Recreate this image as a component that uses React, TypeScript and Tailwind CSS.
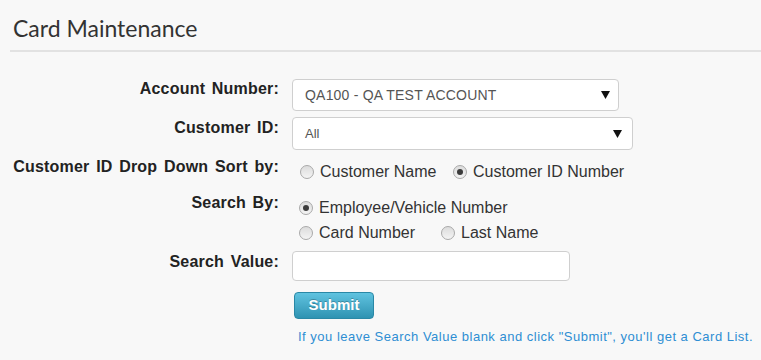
import React from 'react';

const labelCls =
  "w-[279px] shrink-0 text-right font-bold text-[16px] leading-[18px] text-[#222] [word-spacing:2px] tracking-[0.2px]";

const Radio = ({ checked }: { checked?: boolean }) => (
  <span className="inline-flex items-center justify-center w-[14px] h-[14px] rounded-full border border-[#a9a9a9] bg-gradient-to-b from-[#dcdcdc] to-[#f4f4f4] shrink-0">
    {checked && <span className="w-[6px] h-[6px] rounded-full bg-[#3c3c3c]" />}
  </span>
);

const Option = ({ label, checked, className = "" }: { label: string; checked?: boolean; className?: string }) => (
  <span className={`inline-flex items-center h-[20px] ${className}`}>
    <Radio checked={checked} />
    <span className="ml-[6px] text-[16px] text-[#333] leading-[20px]">{label}</span>
  </span>
);

const Select = ({ value, width, height, textCls, arrowRight }: { value: string; width: string; height: string; textCls: string; arrowRight: string }) => (
  <div className={`${width} ${height} flex items-center justify-between bg-white border border-[#cfcfcf] rounded-[4px] pl-[12px] ${arrowRight}`}>
    <span className={`${textCls} text-[#555]`}>{value}</span>
    <svg width="9" height="8" viewBox="0 0 9 8">
      <polygon points="0,0 9,0 4.5,8" fill="#111" />
    </svg>
  </div>
);

export default function App() {
  return (
    <div className="w-[761px] h-[360px] bg-[#f8f8f8] overflow-hidden" style={{ fontFamily: '"Liberation Sans", Arial, sans-serif' }}>
      <div className="pl-[13px] pt-[14px] h-[50px]">
        <h1 className="text-[23px] leading-[28px] text-[#333]" style={{ fontFamily: 'Lato, "Open Sans", sans-serif' }}>
          Card Maintenance
        </h1>
      </div>
      <div className="ml-[10px] h-[2px] bg-[#e2e2e2]" />

      <div className="flex flex-col mt-[27px]">
        {/* Account Number */}
        <div className="flex items-start">
          <div className={`${labelCls} pt-[1px]`}>Account Number:</div>
          <div className="ml-[13px]">
            <Select value="QA100 - QA TEST ACCOUNT" width="w-[327px]" height="h-[32px]" textCls="text-[14px] tracking-[0.2px]" arrowRight="pr-[8px]" />
          </div>
        </div>

        {/* Customer ID */}
        <div className="flex items-start mt-[6px]">
          <div className={`${labelCls} pt-[2px]`}>Customer ID:</div>
          <div className="ml-[13px]">
            <Select value="All" width="w-[341px]" height="h-[33px]" textCls="text-[13px]" arrowRight="pr-[10px]" />
          </div>
        </div>

        {/* Sort by */}
        <div className="flex items-start mt-[8px]">
          <div className={labelCls}>Customer ID Drop Down Sort by:</div>
          <div className="ml-[21px] pt-[4px] flex">
            <Option label="Customer Name" className="w-[153px]" />
            <Option label="Customer ID Number" checked />
          </div>
        </div>

        {/* Search By */}
        <div className="flex items-start mt-[12px]">
          <div className={labelCls}>Search By:</div>
          <div className="ml-[20px] pt-[4px] flex flex-col gap-[5px]">
            <Option label="Employee/Vehicle Number" checked />
            <div className="flex">
              <Option label="Card Number" className="w-[142px]" />
              <Option label="Last Name" />
            </div>
          </div>
        </div>

        {/* Search Value */}
        <div className="flex items-start mt-[8px]">
          <div className={`${labelCls} pt-[2px]`}>Search Value:</div>
          <div className="ml-[13px]">
            <input className="w-[278px] h-[30px] bg-white border border-[#cfcfcf] rounded-[4px] outline-none" />
          </div>
        </div>

        <div className="ml-[294px] mt-[11px]">
          <button className="w-[80px] h-[27px] rounded-[4px] border border-[#2a88a6] bg-gradient-to-b from-[#5fc3e0] to-[#2e93b2] text-white font-bold text-[15px] [text-shadow:0_-1px_0_rgba(0,0,0,0.25)]">
            Submit
          </button>
        </div>

        <div className="ml-[298px] mt-[9px] text-[13px] leading-[18px] text-[#2e8ed3] tracking-[0.5px]">
          If you leave Search Value blank and click "Submit", you'll get a Card List.
        </div>
      </div>
    </div>
  );
}
